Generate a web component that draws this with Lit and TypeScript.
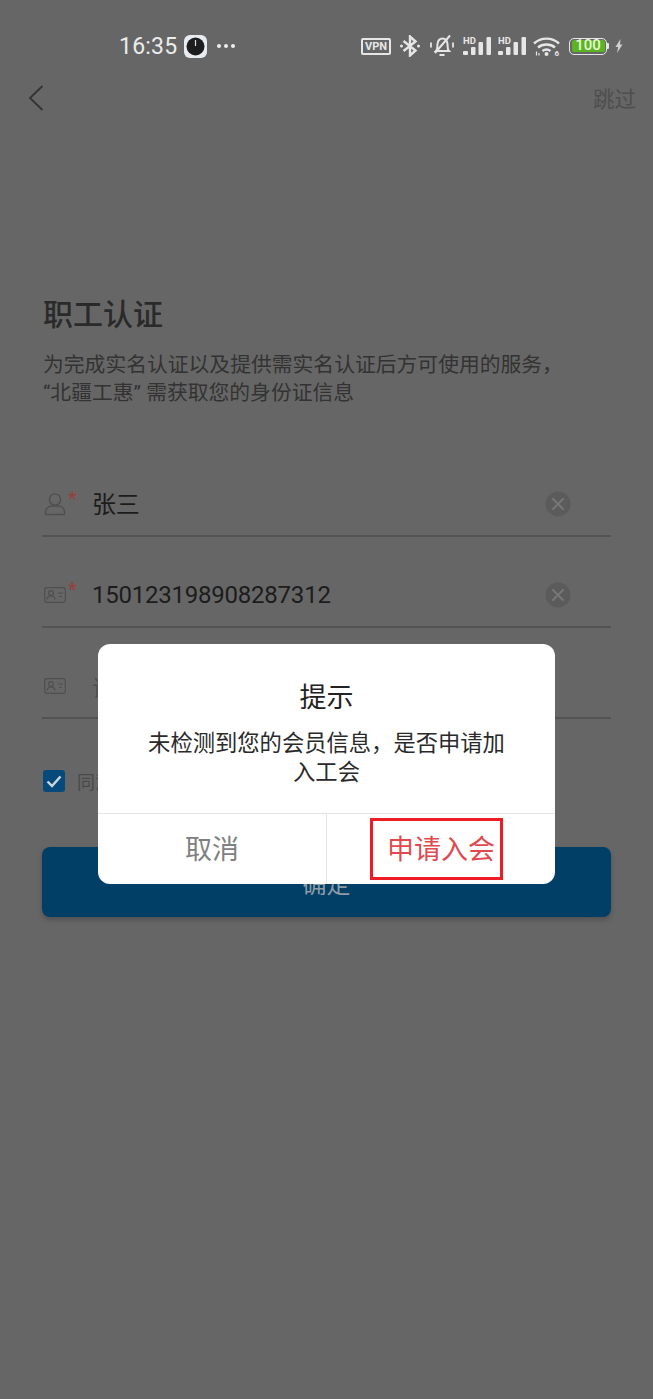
import { LitElement, html, css, svg } from "lit";
import { customElement } from "lit/decorators.js";

const person = svg`<svg width="22" height="24" viewBox="0 0 22 24" fill="none" stroke="#4f4f4f" stroke-width="1.4"><circle cx="11" cy="7.5" r="5.6"/><path d="M1.5 22.5v-2.2c0-4 3-6.3 6.5-6.3h6c3.5 0 6.5 2.3 6.5 6.3v2.2z" stroke-linejoin="round"/></svg>`;
const card = svg`<svg width="22" height="16" viewBox="0 0 22 16" fill="none" stroke="#4f4f4f" stroke-width="1.2"><rect x=".7" y=".7" width="20.6" height="14.6" rx="2.2"/><circle cx="7" cy="6" r="2.4"/><path d="M3 12.5c.3-2.6 2-3.6 4-3.6s3.7 1 4 3.6"/><path d="M14 6h5M15 9.5h3"/></svg>`;
const clear = svg`<svg width="26" height="26" viewBox="0 0 26 26"><circle cx="13" cy="13" r="12.5" fill="#5b5b5b"/><path d="M8 8l10 10M18 8L8 18" stroke="#767676" stroke-width="2.2" stroke-linecap="round"/></svg>`;
const signal = svg`<svg width="31" height="18" viewBox="0 0 31 18"><g fill="#e6e6e6"><rect x="1" y="14" width="5" height="4" rx="1"/><rect x="9" y="10" width="4.5" height="8" rx="1"/><rect x="16.5" y="5" width="4.5" height="13" rx="1"/><rect x="24.5" y="0" width="4.5" height="18" rx="1"/></g></svg>`;

@customElement("app-root")
export class AppRoot extends LitElement {
  static styles = css`
    :host { display: block; width: 653px; height: 1399px; position: relative; overflow: hidden;
      background: #666; font-family: "Noto Sans CJK SC", "Noto Sans", sans-serif; }
    .status { height: 71px; padding: 21px 30px 0 119px; box-sizing: border-box; display: flex; align-items: center; color: #ececec; }
    .time { font: 400 23px Roboto, sans-serif; width: 65px; letter-spacing: .2px; }
    .dots { display: flex; gap: 3px; margin-left: 10px; }
    .dots i { width: 4px; height: 4px; border-radius: 50%; background: #eee; }
    .sys { margin-left: auto; display: flex; align-items: center; }
    .sys svg, .sys > div { flex: none; }
    .vpn { font: 700 11px/1 Roboto, sans-serif; border: 2px solid #e6e6e6; border-radius: 2px; width: 30px; height: 17px; box-sizing: border-box; display: flex; align-items: center; justify-content: center; color: #e6e6e6; }
    .bt { margin-left: 9px; }
    .bell { margin-left: 9px; }
    .sig { position: relative; display: flex; }
    .sig1 { margin-left: 7px; }
    .sig2 { margin-left: 4px; }
    .hd { position: absolute; left: 1px; top: -1px; font: 700 9.5px/10px Roboto, sans-serif; color: #e6e6e6; }
    .wifi { margin-left: 5px; }
    .batt { margin-left: 9px; width: 38px; height: 17px; border: 1.5px solid #e6e6e6; border-radius: 5px; box-sizing: border-box; display: flex; padding: 1.5px; }
    .batt span { flex: 1; background: #5cb520; border-radius: 2px; color: #e8f6dc; font: 500 15px/11px Roboto, sans-serif; text-align: center; }
    .nub { width: 2px; height: 6px; background: #e6e6e6; margin: 0 6px 0 0; border-radius: 0 1px 1px 0; }
    nav { display: flex; align-items: center; justify-content: space-between; height: 55px; padding: 0 17px 2px 28px; box-sizing: border-box; color: #4e4e4e; font-size: 21.5px; }
    main { padding: 0 42px; }
    h1 { margin: 164px 0 0 1px; font-size: 30px; font-weight: 500; line-height: 44px; color: #2a2a2a; }
    .sub { margin: 17px 0 0 1px; font-family: Roboto, "Noto Sans CJK SC", sans-serif; font-size: 20.8px; line-height: 28px; color: #333; white-space: nowrap; }
    .rows { margin-top: 66px; display: flex; flex-direction: column; gap: 27px; }
    .row { height: 62px; border-bottom: 2px solid #535353; display: flex; align-items: center; position: relative; padding-left: 2px; }
    .icon { width: 22px; display: flex; }
    .star { position: absolute; left: 26px; top: 16px; color: #963f3f; font: 400 20px/20px Roboto, sans-serif; }
    .val { margin-left: 26px; font: 400 24px Roboto, "Noto Sans CJK SC", sans-serif; color: #1c1c1c; letter-spacing: -.23px; flex: 1; }
    .val.cn { margin-bottom: 4px; }
    .val.ph { color: #4e4e4e; font-size: 22px; }
    .x { margin-right: 40px; display: flex; }
    .agree { display: flex; align-items: center; margin-top: 50px; padding-left: 1px; height: 24px; }
    .check { width: 22px; height: 22px; background: #064a7c; border-radius: 3px; display: flex; align-items: center; justify-content: center; }
    .agree span { margin-left: 12px; font-size: 18px; color: #4a4a4a; }
    .ok { margin-top: 54px; height: 70px; border-radius: 8px; background: #013f66; box-shadow: 0 3px 5px rgba(0,0,0,.2); display: flex; align-items: center; justify-content: center; color: #8d9ca7; font-size: 24px; }
    .dialog { position: absolute; left: 98px; top: 644px; width: 457px; height: 240px; background: #fff; border-radius: 12px; display: flex; flex-direction: column; }
    .dt { margin-top: 33px; text-align: center; font-size: 27px; line-height: 38px; color: #222; font-weight: 400; }
    .dm { margin: 12px 48px 0; height: 86px; font-size: 22.3px; line-height: 29px; text-align: center; color: #2a2a2a; }
    .btns { display: flex; flex: 1; border-top: 1.5px solid #e4e4e4; }
    .btns div { flex: 1; display: flex; align-items: center; justify-content: center; font-size: 27px; padding-bottom: 4px; }
    .cancel { color: #808080; border-right: 1.5px solid #e4e4e4; }
    .apply { color: #e04a4f; }
    .mark { position: absolute; left: 370px; top: 818px; width: 133px; height: 62px; box-sizing: border-box; border: 3px solid #ee1c25; pointer-events: none; }
  `;

  render() {
    return html`
      <div class="status">
        <div class="time">16:35</div>
        <svg width="23" height="23" viewBox="0 0 23 23"><rect width="23" height="23" rx="6" fill="#e8ecf0"/><circle cx="11.5" cy="11.5" r="9" fill="#1d1d1f"/><path d="M11.5 5v6" stroke="#ddd" stroke-width="1.2"/></svg>
        <div class="dots"><i></i><i></i><i></i></div>
        <div class="sys">
          <div class="vpn">VPN</div>
          <svg class="bt" width="20" height="22" viewBox="0 0 20 22" fill="none" stroke="#e6e6e6" stroke-width="2.4"><path d="M3.5 6l12 9.5-5.500 5V1.500l5.500 5-12 9.500"/><circle cx="1.5" cy="11" r="1.5" fill="#e6e6e6" stroke="none"/><circle cx="18.5" cy="11" r="1.5" fill="#e6e6e6" stroke="none"/></svg>
          <svg class="bell" width="26" height="24" viewBox="0 0 26 24" fill="none" stroke="#e6e6e6" stroke-width="2"><path d="M7 17c2-2 1-4 1.5-7C9 6.5 11 4.5 13.5 4.5S18 6.5 18.5 10c.4 3-.5 5 1.5 7z"/><path d="M10.5 21h5M21 1.5L6 19"/><path d="M2 8.5v5M24 8.5v5" stroke-width="1.8"/></svg>
          <span class="sig sig1"><span class="hd">HD</span>${signal}</span>
          <span class="sig sig2"><span class="hd">HD</span>${signal}</span>
          <svg class="wifi" width="27" height="24" viewBox="0 -2 27 24" fill="none" stroke="#e6e6e6" stroke-width="2.4"><path d="M1 7.5C8 1 19 1 26 7.5M5 11.5c4.5-4 12.5-4 17 0M9.5 15c2.500-2 5.500-2 8 0"/><circle cx="13.5" cy="18" r="2" fill="#e6e6e6" stroke="none"/><path d="M3.5 19.5v-4M6 19.5v-2.5" stroke-width="1.2"/><text x="21.500" y="20" font-size="8" font-weight="700" font-family="Roboto, sans-serif" fill="#e6e6e6" stroke="none">6</text></svg>
          <div class="batt"><span>100</span></div>
          <div class="nub"></div>
          <svg width="8" height="14" viewBox="0 0 8 14"><path d="M5.5 0L.5 8h2.700L2 14l5.500-8.500H5z" fill="#d0d0d0"/></svg>
        </div>
      </div>
      <nav>
        <svg width="16" height="26" viewBox="0 0 16 26" fill="none" stroke="#333" stroke-width="1.8"><path d="M14.5 1L2 13l12.500 12"/></svg>
        <span>跳过</span>
      </nav>
      <main>
        <h1>职工认证</h1>
        <p class="sub">为完成实名认证以及提供需实名认证后方可使用的服务，<br />“北疆工惠” 需获取您的身份证信息</p>
        <div class="rows">
          <div class="row"><span class="icon">${person}</span><span class="star">*</span><span class="val cn">张三</span><span class="x">${clear}</span></div>
          <div class="row"><span class="icon">${card}</span><span class="star">*</span><span class="val">150123198908287312</span><span class="x">${clear}</span></div>
          <div class="row"><span class="icon">${card}</span><span class="val ph">请输入</span></div>
        </div>
        <div class="agree">
          <div class="check"><svg width="16" height="13" viewBox="0 0 16 13" fill="none" stroke="#cfd8e0" stroke-width="2.4"><path d="M1.5 6.5l4.5 4.5L14.5 1.5"/></svg></div>
          <span>同意</span>
        </div>
        <div class="ok">确定</div>
      </main>
      <div class="dialog">
        <div class="dt">提示</div>
        <div class="dm">未检测到您的会员信息，是否申请加入工会</div>
        <div class="btns"><div class="cancel">取消</div><div class="apply">申请入会</div></div>
      </div>
      <div class="mark"></div>
    `;
  }
}
